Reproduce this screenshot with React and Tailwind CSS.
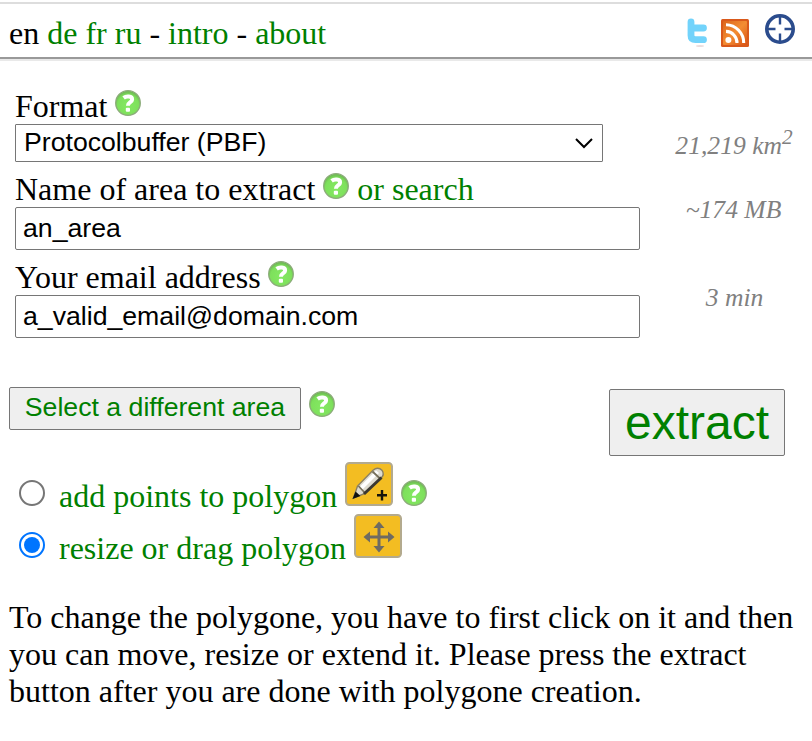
import React from "react";

function Help({ className = "" }) {
  return (
    <svg viewBox="0 0 26 26" className={`block h-[26px] w-[26px] shrink-0 ${className}`}>
      <defs>
        <radialGradient id="helpFill" cx="50%" cy="60%" r="55%">
          <stop offset="0" stopColor="#84e962" />
          <stop offset="0.78" stopColor="#7ee05c" />
          <stop offset="1" stopColor="#6fbd54" />
        </radialGradient>
      </defs>
      <circle cx="13" cy="13" r="12.3" fill="url(#helpFill)" stroke="#8cab7a" strokeWidth="1.3" />
      <path d="M8.6 7.8C11 6 17.3 5.7 17.1 9.6C17 12.3 13 12 12.9 15.8" fill="none" stroke="#fff" strokeWidth="4" />
      <rect x="10.8" y="17.7" width="4.2" height="4" rx="1" fill="#fff" />
    </svg>
  );
}

function Twitter() {
  return (
    <svg viewBox="0 0 22 30" className="mt-[17px] ml-[686px] block h-[30px] w-[22px]">
      <ellipse cx="14" cy="29" rx="4" ry="1" fill="#eadddd" />
      <path d="M5 5V18.5Q5 22.7 9.5 22.7H17.5M5 11H17.5" fill="none" stroke="#72d3fb" strokeWidth="6.8" strokeLinecap="round" strokeLinejoin="round" />
    </svg>
  );
}

function Rss() {
  return (
    <svg viewBox="0 0 28 28" className="mt-[19px] ml-[13px] block h-[28px] w-[28px]">
      <defs>
        <linearGradient id="rssFill" x1="0" y1="0" x2="1" y2="1">
          <stop offset="0" stopColor="#dc651b" />
          <stop offset="0.5" stopColor="#f38d33" />
          <stop offset="1" stopColor="#d95314" />
        </linearGradient>
      </defs>
      <rect width="28" height="28" rx="1.5" fill="#d9591b" />
      <rect x="2" y="2" width="24" height="24" rx="1" fill="url(#rssFill)" />
      <circle cx="7.4" cy="21" r="3" fill="#fff" />
      <path d="M5 12.4A11.4 11.4 0 0 1 16 24M5 5.8A18 18 0 0 1 22.7 24" fill="none" stroke="#fff" strokeWidth="3.1" />
    </svg>
  );
}

function Target() {
  return (
    <svg viewBox="0 0 32 32" className="mt-[13px] ml-[16px] block h-[32px] w-[32px]">
      <circle cx="15" cy="16" r="13.2" fill="#fff" stroke="#2b4c8d" strokeWidth="3.6" />
      <path d="M15 3V11.5M15 20.5V29M2 16H10.5M19.5 16H28" stroke="#2b4c8d" strokeWidth="2.4" />
    </svg>
  );
}

function PencilTile() {
  return (
    <svg viewBox="0 0 48 44" className="block h-[44px] w-[48px] shrink-0">
      <rect x="1" y="1" width="46" height="42" rx="3.5" fill="#f3bd22" stroke="#b3aa8e" strokeWidth="2" />
      <path d="M8.5 36L12.5 24L28 8.2Q33 4.3 37.2 8.6Q39.8 12.5 36 16L20 31.5Z" fill="#dedbd0" stroke="#8b8062" strokeWidth="1.4" />
      <path d="M14.5 25L31 8.5L34 11L17 28Z" fill="#fff" />
      <path d="M13.5 24L20 31M27.5 9.5L35 16.5" stroke="#77705c" strokeWidth="1.8" />
      <path d="M19 32L36.5 15.5" stroke="#3a3832" strokeWidth="3" />
      <path d="M7.5 37L10.5 29.5L15.5 34Z" fill="#111" />
      <path d="M37 28V38.5M32 33.2H42" stroke="#16140c" strokeWidth="2.4" />
    </svg>
  );
}

function MoveTile() {
  return (
    <svg viewBox="0 0 48 44" className="ml-[8px] block h-[44px] w-[48px] shrink-0">
      <rect x="1" y="1" width="46" height="42" rx="3.5" fill="#f3bd22" stroke="#b3aa8e" strokeWidth="2" />
      <path d="M25 12V34M14 23H36" stroke="#6e6b62" strokeWidth="3" />
      <path d="M25 7.5L30.5 14H19.5ZM25 38.5L30.5 32H19.5ZM9.5 23L16 17.5V28.5ZM40.5 23L34 17.5V28.5Z" fill="#6e6b62" />
    </svg>
  );
}

const inputClass =
  "block h-[43px] w-[625px] rounded-[2px] border border-[#767676] bg-white px-[7px] py-0 font-['Liberation_Sans',Arial,sans-serif] text-[26.67px] leading-[30px] text-black outline-none";
const radioClass =
  "m-0 ml-[19px] flex h-[26px] w-[26px] shrink-0 appearance-none items-center justify-center rounded-full border-2 border-[#767676] bg-white checked:border-[#0075ff] checked:before:block checked:before:h-[16px] checked:before:w-[16px] checked:before:rounded-full checked:before:bg-[#0075ff] checked:before:content-['']";

export default function App() {
  return (
    <div className="h-[741px] w-[812px] overflow-hidden bg-white pt-[2px] font-['Liberation_Serif','Times_New_Roman',serif] text-[32px] leading-[36px] text-black">
      <header className="flex h-[59px] border-t-2 border-b-2 border-t-[#dddddd] border-b-[#e9e9e9]">
        <div className="flex w-full border-b-2 border-[#999999]">
          <nav className="mt-[11px] ml-[9px] w-0 whitespace-nowrap">
            en <a className="text-[#008000]">de</a> <a className="text-[#008000]">fr</a> <a className="text-[#008000]">ru</a> - <a className="text-[#008000]">intro</a> - <a className="text-[#008000]">about</a>
          </nav>
          <div className="-ml-[9px] flex -translate-y-[4px]">
            <Twitter />
            <Rss />
            <Target />
          </div>
        </div>
      </header>

      <main>
        <div className="flex h-[326px] pt-[25px] pl-[15px]">
          <form className="w-[625px]">
            <div className="flex h-[38px]">
              <label className="pt-[2px]">Format</label>
              <Help className="mt-[4px] ml-[8px]" />
            </div>
            <div className="flex h-[38px] w-[588px] items-center justify-between rounded-[1px] border border-[#767676] pr-[9px] pl-[8px] font-['Liberation_Sans',Arial,sans-serif] text-[26.67px] leading-[36px]">
              <span className="pb-[2px]">Protocolbuffer (PBF)</span>
              <svg viewBox="0 0 18 11" className="h-[11px] w-[18px]">
                <path d="M1 1L9 9L17 1" fill="none" stroke="#000" strokeWidth="2" />
              </svg>
            </div>
            <div className="mt-[7px] flex h-[38px]">
              <label className="pt-[2px]">Name of area to extract</label>
              <Help className="mt-[4px] ml-[8px]" />
              <a className="ml-[8px] pt-[2px] text-[#008000]">or search</a>
            </div>
            <input className={inputClass} defaultValue="an_area" />
            <div className="mt-[7px] flex h-[38px]">
              <label className="pt-[2px]">Your email address</label>
              <Help className="mt-[4px] ml-[7px]" />
            </div>
            <input className={inputClass} defaultValue="a_valid_email@domain.com" />
          </form>
          <aside className="ml-[25px] flex w-[138px] flex-col text-center text-[25.6px] leading-[30px] text-[#808080] italic">
            <div className="mt-[45px] whitespace-nowrap">
              21,219 km<sup className="-top-[10px] text-[21.33px] leading-none">2</sup>
            </div>
            <div className="mt-[34px] pr-px">~174 MB</div>
            <div className="mt-[58px] pl-px">3 min</div>
          </aside>
        </div>

        <div className="flex h-[75px] pl-[9px]">
          <button className="h-[43px] w-[292px] rounded-[2px] border border-[#767676] bg-[#efefef] pb-[3px] font-['Liberation_Sans',Arial,sans-serif] text-[26.67px] leading-[30px] whitespace-nowrap text-[#008000]">
            Select a different area
          </button>
          <Help className="mt-[4px] ml-[8px]" />
          <button className="mt-[2px] ml-[274px] h-[67px] w-[176px] rounded-[2px] border border-[#767676] bg-[#efefef] font-['Liberation_Sans',Arial,sans-serif] text-[48px] leading-[54px] text-[#008000]">
            extract
          </button>
        </div>

        <div className="flex h-[52px] items-start">
          <input type="radio" name="mode" className={`${radioClass} mt-[18px]`} />
          <label className="mt-[16px] ml-[14px] w-[286px] whitespace-nowrap text-[#008000]">add points to polygon</label>
          <PencilTile />
          <Help className="mt-[18px] ml-[8px]" />
        </div>
        <div className="flex h-[52px] items-start">
          <input type="radio" name="mode" defaultChecked className={`${radioClass} mt-[18px]`} />
          <label className="mt-[16px] ml-[14px] whitespace-nowrap text-[#008000]">resize or drag polygon</label>
          <MoveTile />
        </div>

        <p className="mt-[33px] pl-[9px] leading-[37px] whitespace-nowrap">
          To change the polygone, you have to first click on it and then
          <br />
          you can move, resize or extend it. Please press the extract
          <br />
          button after you are done with polygone creation.
        </p>
      </main>
    </div>
  );
}
